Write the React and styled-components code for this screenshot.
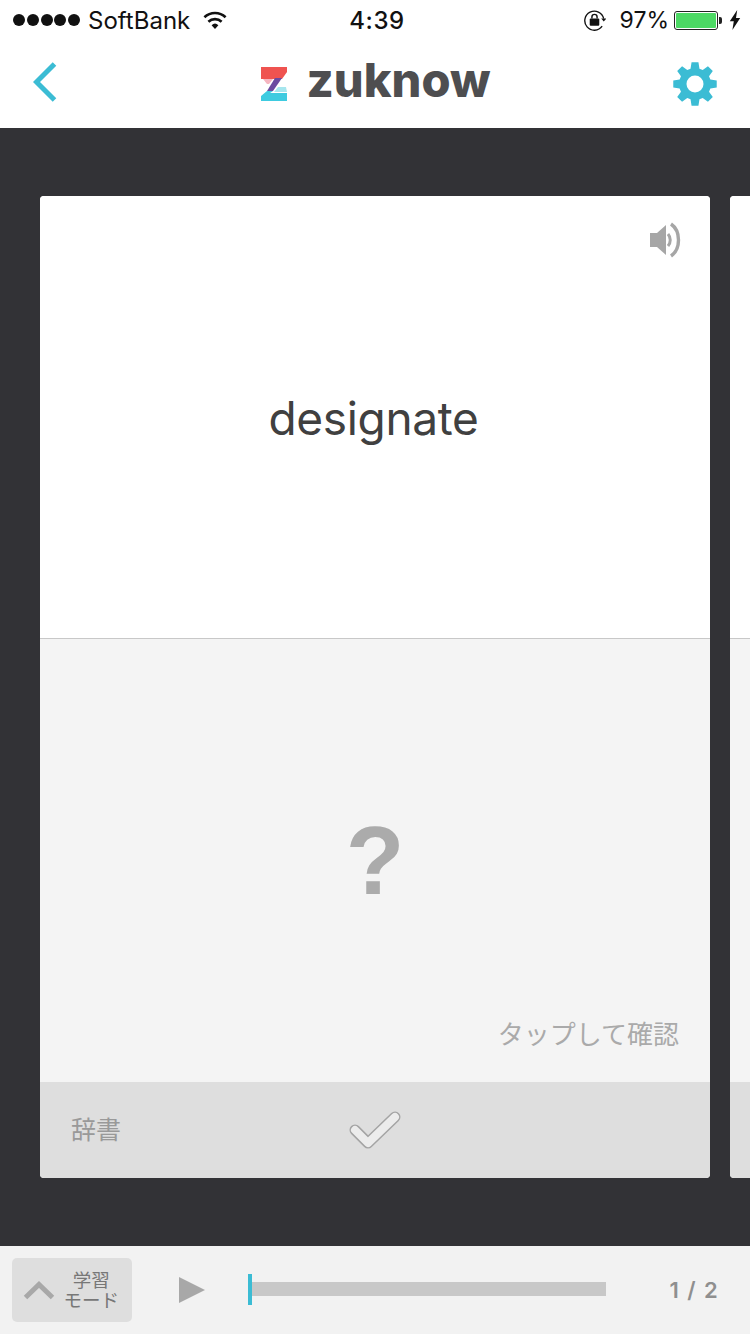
import React from 'react'
import styled, { createGlobalStyle } from 'styled-components'

const GlobalStyle = createGlobalStyle`
  html, body { margin: 0; padding: 0; background: #323236; }
  body { font-family: "Inter", "Noto Sans CJK JP", sans-serif; }
`

const Page = styled.div`
  width: 750px;
  height: 1334px;
  display: flex;
  flex-direction: column;
  overflow: hidden;
`

const StatusBar = styled.div`
  height: 40px;
  flex: none;
  background: #fff;
  display: grid;
  grid-template-columns: 1fr auto 1fr;
  align-items: center;
  padding: 0 9px 0 13px;
  color: #111;
`

const StatusLeft = styled.div`
  display: flex;
  align-items: center;
  gap: 8px;
  font-size: 24px;
`

const Dots = styled.div`
  display: flex;
  gap: 1.75px;
`

const Dot = styled.span`
  width: 12px;
  height: 12px;
  border-radius: 50%;
  background: #111;
`

const WifiSlot = styled.span`
  display: flex;
  margin-left: 4px;
`

const Clock = styled.div`
  font-weight: 500;
  font-size: 24px;
  letter-spacing: 0.6px;
`

const StatusRight = styled.div`
  display: flex;
  align-items: center;
  justify-content: flex-end;
  gap: 8px;
`

const Percent = styled.span`
  font-size: 23px;
  margin: 0 -3px 0 6px;
`

const Battery = styled.div`
  width: 44px;
  height: 19px;
  box-sizing: border-box;
  border: 1px solid #222;
  border-radius: 3px;
  padding: 1px;
  margin-right: 3px;
  position: relative;
  &::before {
    content: '';
    display: block;
    height: 100%;
    background: #4cd964;
    border-radius: 1px;
  }
  &::after {
    content: '';
    position: absolute;
    right: -5px;
    top: 5px;
    width: 3px;
    height: 7px;
    background: #222;
    border-radius: 0 2px 2px 0;
  }
`

const Header = styled.header`
  height: 88px;
  flex: none;
  box-sizing: border-box;
  background: #fff;
  display: grid;
  grid-template-columns: 1fr auto 1fr;
  align-items: center;
  padding: 0 33px;
`

const BackLink = styled.div`
  display: flex;
  margin-bottom: 5px;
`

const SettingsLink = styled.div`
  display: flex;
  justify-self: end;
`

const Logo = styled.div`
  display: flex;
  align-items: center;
  gap: 19px;
`

const LogoText = styled.span`
  font-family: "Inter", sans-serif;
  font-weight: 800;
  font-size: 47px;
  line-height: 1;
  color: #4e4e50;
  letter-spacing: 0;
  margin-bottom: 10px;
`

const Stage = styled.main`
  flex: 1;
  background: #323236;
  padding: 68px 0 0 40px;
  display: flex;
  gap: 20px;
  overflow: hidden;
`

const Card = styled.section`
  width: 670px;
  height: 982px;
  flex: none;
  border-radius: 4px;
  overflow: hidden;
  display: flex;
  flex-direction: column;
  background: #fff;
`

const Front = styled.div`
  height: 442px;
  flex: none;
  background: #fff;
  border-bottom: 1px solid #c8c8c8;
  display: flex;
  align-items: center;
  justify-content: center;
  position: relative;
`

const Word = styled.h1`
  margin: 2px 3px 0 0;
  font-weight: 400;
  font-size: 46px;
  letter-spacing: -0.35px;
  color: #404040;
`

const SoundButton = styled.div`
  position: absolute;
  top: 26px;
  right: 28px;
  line-height: 0;
`

const Back = styled.div`
  flex: 1;
  background: #f4f4f4;
  display: flex;
  flex-direction: column;
  align-items: center;
  justify-content: flex-end;
  padding: 0 31px 32px;
`

const Question = styled.div`
  font-family: "Liberation Sans", sans-serif;
  font-weight: 700;
  font-size: 96px;
  line-height: 1;
  color: #ababab;
  margin-bottom: 107px;
`

const TapHint = styled.div`
  align-self: flex-end;
  font-family: "Noto Sans CJK JP", sans-serif;
  font-size: 26px;
  line-height: 34px;
  color: #aaa;
`

const CardFooter = styled.div`
  height: 96px;
  flex: none;
  background: #dedede;
  display: grid;
  grid-template-columns: 1fr auto 1fr;
  align-items: center;
  padding: 0 31px;
`

const DictLabel = styled.div`
  font-family: "Noto Sans CJK JP", sans-serif;
  font-size: 25px;
  color: #999;
  margin-bottom: 4px;
`

const BottomBar = styled.footer`
  height: 88px;
  flex: none;
  background: #f2f2f2;
  display: flex;
  align-items: center;
  padding: 0 31px 0 12px;
`

const ModeButton = styled.div`
  width: 120px;
  height: 64px;
  box-sizing: border-box;
  background: #dedede;
  border-radius: 5px;
  display: flex;
  align-items: center;
  padding: 0 13px 0 11px;
  justify-content: space-between;
`

const ModeLabel = styled.div`
  font-family: "Noto Sans CJK JP", sans-serif;
  font-size: 18.5px;
  line-height: 20px;
  color: #777;
  text-align: center;
  margin-bottom: 3px;
`

const PlayIcon = styled.div`
  width: 0;
  height: 0;
  margin-left: 47px;
  border-left: 26px solid #a8a8a8;
  border-top: 13px solid transparent;
  border-bottom: 13px solid transparent;
`

const Track = styled.div`
  width: 358px;
  height: 14px;
  margin: 0 0 2px 43px;
  background: #c8c8c8;
  position: relative;
`

const Thumb = styled.div`
  position: absolute;
  left: 0;
  top: -8px;
  width: 4px;
  height: 31px;
  background: #3bbcd4;
`

const Counter = styled.div`
  margin-left: auto;
  font-weight: 600;
  font-size: 22px;
  letter-spacing: 1.4px;
  color: #8f8f8f;
`

const Wifi = () => (
  <svg width="26" height="20" viewBox="0 0 26 20">
    <path d="M13 19 9.6 15.2a5 5 0 0 1 6.8 0Z" fill="#111" />
    <path d="M6.4 11.8a9.6 9.6 0 0 1 13.200 0" fill="none" stroke="#111" strokeWidth="2.6" />
    <path d="M2.4 7.2a15.4 15.4 0 0 1 21.200 0" fill="none" stroke="#111" strokeWidth="2.6" />
  </svg>
)

const RotationLock = () => (
  <svg width="23" height="22" viewBox="0 0 24 23">
    <path d="M21.600 10A10 10 0 1 0 20 18" fill="none" stroke="#111" strokeWidth="1.4" />
    <path d="M19 10h5.400l-2.700 3Z" fill="#111" />
    <rect x="7" y="10" width="10" height="7.500" rx="1" fill="#111" />
    <path d="M9.300 10V8.300a2.700 2.700 0 0 1 5.400 0V10" fill="none" stroke="#111" strokeWidth="1.500" />
  </svg>
)

const Bolt = () => (
  <svg width="12" height="20" viewBox="0 0 12 20">
    <path d="M8.200 0 0.800 11.200h4L3.400 20l7.800-12H7Z" fill="#111" />
  </svg>
)

const BackChevron = () => (
  <svg width="24" height="40" viewBox="0 0 24 40">
    <path d="M21.500 2 3.500 20l18 18" fill="none" stroke="#3bbcd4" strokeWidth="5" />
  </svg>
)

const LogoMark = () => (
  <svg width="28" height="36" viewBox="0 0 28 36">
    <path d="M1 1h26v5l-5 7H1Z" fill="#ef5350" />
    <path d="M3 13h10l-4 5H7Z" fill="#f6b5c0" />
    <path d="M15 12h7L13 25H7Z" fill="#6b4aa0" />
    <path d="M18 21h8l1 5H14Z" fill="#a6e6ee" />
    <path d="M7 25h6l-3 2h17v8H1v-5Z" fill="#3ecbe0" />
  </svg>
)

const gearPath = (() => {
  const teeth = 8
  const cx = 22
  const cy = 22
  const pts = []
  for (let i = 0; i < teeth; i++) {
    const a = (i / teeth) * Math.PI * 2 - Math.PI / 2
    const step = (Math.PI * 2) / teeth
    const at = (r, d) => `${(cx + r * Math.cos(a + d)).toFixed(2)} ${(cy + r * Math.sin(a + d)).toFixed(2)}`
    pts.push(at(16, -step * 0.36), at(22, -step * 0.2), at(22, step * 0.2), at(16, step * 0.36))
  }
  return `M${pts.join('L')}Z`
})()

const Gear = () => (
  <svg width="44" height="44" viewBox="0 0 44 44">
    <path d={gearPath} fill="#3bbcd4" />
    <circle cx="22" cy="22" r="8.500" fill="#fff" />
  </svg>
)

const Speaker = () => (
  <svg width="32" height="36" viewBox="0 0 32 36">
    <path d="M0 11h7L16 3v30l-9-8H0Z" fill="#a6a6a6" />
    <path d="M18 12c3 3.500 3 8.500 0 12" fill="none" stroke="#a6a6a6" strokeWidth="3" />
    <path d="M21 2c10 7 10 25 0 32" fill="none" stroke="#a6a6a6" strokeWidth="3.400" />
  </svg>
)

const checkLine = 'M6 19 19 32 46 6'

const Check = () => (
  <svg width="52" height="39" viewBox="0 0 52 39">
    <g fill="none" strokeLinecap="round" strokeLinejoin="round">
      <path d={checkLine} stroke="#a4a4a4" strokeWidth="11" />
      <path d={checkLine} stroke="#ececec" strokeWidth="8" />
    </g>
  </svg>
)

const ChevronUp = () => (
  <svg width="32" height="20" viewBox="0 0 32 20">
    <path d="M2.500 17.500 16 4.500l13.500 13" fill="none" stroke="#a8a8a8" strokeWidth="5" />
  </svg>
)

export default function App() {
  return (
    <Page>
      <GlobalStyle />
      <StatusBar>
        <StatusLeft>
          <Dots>
            {[0, 1, 2, 3, 4].map(i => <Dot key={i} />)}
          </Dots>
          <span>SoftBank</span>
          <WifiSlot><Wifi /></WifiSlot>
        </StatusLeft>
        <Clock>4:39</Clock>
        <StatusRight>
          <RotationLock />
          <Percent>97%</Percent>
          <Battery />
          <Bolt />
        </StatusRight>
      </StatusBar>
      <Header>
        <BackLink><BackChevron /></BackLink>
        <Logo>
          <LogoMark />
          <LogoText>zuknow</LogoText>
        </Logo>
        <SettingsLink><Gear /></SettingsLink>
      </Header>
      <Stage>
        <Card>
          <Front>
            <Word>designate</Word>
            <SoundButton><Speaker /></SoundButton>
          </Front>
          <Back>
            <Question>?</Question>
            <TapHint>タップして確認</TapHint>
          </Back>
          <CardFooter>
            <DictLabel>辞書</DictLabel>
            <Check />
          </CardFooter>
        </Card>
        <Card>
          <Front />
          <Back />
          <CardFooter />
        </Card>
      </Stage>
      <BottomBar>
        <ModeButton>
          <ChevronUp />
          <ModeLabel>学習<br />モード</ModeLabel>
        </ModeButton>
        <PlayIcon />
        <Track><Thumb /></Track>
        <Counter>1 / 2</Counter>
      </BottomBar>
    </Page>
  )
}
